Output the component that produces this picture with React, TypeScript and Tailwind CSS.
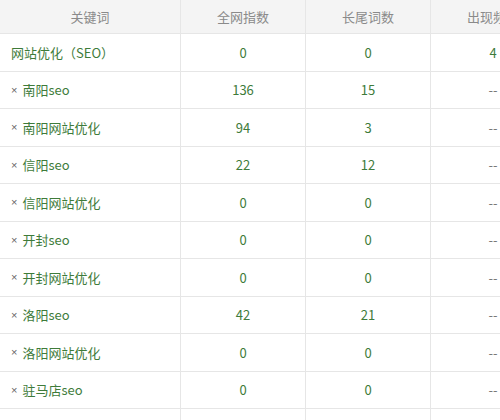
const rows: { kw: string; x: boolean; total: string; tail: string; freq: string }[] = [
  { kw: "网站优化（SEO）", x: false, total: "0", tail: "0", freq: "4" },
  { kw: "南阳seo", x: true, total: "136", tail: "15", freq: "--" },
  { kw: "南阳网站优化", x: true, total: "94", tail: "3", freq: "--" },
  { kw: "信阳seo", x: true, total: "22", tail: "12", freq: "--" },
  { kw: "信阳网站优化", x: true, total: "0", tail: "0", freq: "--" },
  { kw: "开封seo", x: true, total: "0", tail: "0", freq: "--" },
  { kw: "开封网站优化", x: true, total: "0", tail: "0", freq: "--" },
  { kw: "洛阳seo", x: true, total: "42", tail: "21", freq: "--" },
  { kw: "洛阳网站优化", x: true, total: "0", tail: "0", freq: "--" },
  { kw: "驻马店seo", x: true, total: "0", tail: "0", freq: "--" },
];

const cell = "border-r border-b border-[#e6e6e6] flex items-center";
const cols = "grid grid-cols-[181px_125px_125px_125px]";

export default function App() {
  return (
    <div className="w-[500px] h-[420px] overflow-hidden bg-white font-['Noto_Sans_CJK_SC',sans-serif] text-[13px]">
      <div className="w-[556px]">
        <div className={`${cols} h-[34px] bg-[#f4f4f4] text-[#8a8a8a]`}>
          {["关键词", "全网指数", "长尾词数", "出现频率"].map((h) => (
            <div key={h} className={`${cell} justify-center`}>
              {h}
            </div>
          ))}
        </div>
        {rows.map((r) => (
          <div key={r.kw} className={`${cols} h-[37.5px]`}>
            <div className={`${cell} pl-[11px] text-[#3e7b3a]`}>
              {r.x && (
                <span className="text-[#666] mr-[5px] text-[11px] font-['Liberation_Sans',sans-serif]">×</span>
              )}
              {r.kw}
            </div>
            <div className={`${cell} justify-center text-[#3e7b3a]`}>{r.total}</div>
            <div className={`${cell} justify-center text-[#3e7b3a]`}>{r.tail}</div>
            <div className={`${cell} justify-center ${r.freq === "--" ? "text-[#777]" : "text-[#3e7b3a]"}`}>
              {r.freq}
            </div>
          </div>
        ))}
        <div className={`${cols} h-[37.5px] text-[#ece4b8]`}>
          <div className={`${cell} pl-[11px]`}>× 平顶山网站优化</div>
          <div className={`${cell} justify-center`}>18</div>
          <div className={`${cell} justify-center`}>0</div>
          <div className={`${cell} justify-center`}>--</div>
        </div>
      </div>
    </div>
  );
}
